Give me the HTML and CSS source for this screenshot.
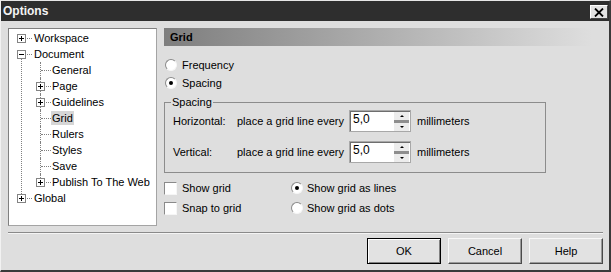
FILE: index.html
```html
<!DOCTYPE html>
<html lang="en">

<head>
    <meta charset="UTF-8">
    <title>Options</title>
    <link rel="stylesheet" href="styles.css">
</head>

<body>

    <div class="window">
        <div class="titlebar">
            <span class="title">Options</span>
            <span class="close">
                <svg width="10" height="9" viewBox="0 0 10 9">
                    <path d="M1 0.5 L9 8.5 M9 0.5 L1 8.5" stroke="#000" stroke-width="1.8" fill="none" />
                </svg>
            </span>
        </div>

        <div class="content">
            <!-- Category tree -->
            <div class="tree">
                <ul class="tree-root">
                    <li>
                        <div class="row">
                            <span class="toggle"><svg width="9" height="9"><rect x="0.5" y="0.5" width="8" height="8" fill="#fff" stroke="#848484" /><path d="M2 4.5h5M4.5 2v5" stroke="#000" /></svg></span>
                            <span class="dash"></span><span class="label">Workspace</span>
                        </div>
                    </li>
                    <li class="open">
                        <div class="row">
                            <span class="toggle"><svg width="9" height="9"><rect x="0.5" y="0.5" width="8" height="8" fill="#fff" stroke="#848484" /><path d="M2 4.5h5" stroke="#000" /></svg></span>
                            <span class="dash"></span><span class="label">Document</span>
                        </div>
                        <ul class="tree-sub">
                            <li class="leaf"><div class="row"><span class="toggle"></span><span class="dash"></span><span class="label">General</span></div></li>
                            <li>
                                <div class="row">
                                    <span class="toggle"><svg width="9" height="9"><rect x="0.5" y="0.5" width="8" height="8" fill="#fff" stroke="#848484" /><path d="M2 4.5h5M4.5 2v5" stroke="#000" /></svg></span>
                                    <span class="dash"></span><span class="label">Page</span>
                                </div>
                            </li>
                            <li>
                                <div class="row">
                                    <span class="toggle"><svg width="9" height="9"><rect x="0.5" y="0.5" width="8" height="8" fill="#fff" stroke="#848484" /><path d="M2 4.5h5M4.5 2v5" stroke="#000" /></svg></span>
                                    <span class="dash"></span><span class="label">Guidelines</span>
                                </div>
                            </li>
                            <li class="leaf"><div class="row"><span class="toggle"></span><span class="dash"></span><span class="label selected">Grid</span></div></li>
                            <li class="leaf"><div class="row"><span class="toggle"></span><span class="dash"></span><span class="label">Rulers</span></div></li>
                            <li class="leaf"><div class="row"><span class="toggle"></span><span class="dash"></span><span class="label">Styles</span></div></li>
                            <li class="leaf"><div class="row"><span class="toggle"></span><span class="dash"></span><span class="label">Save</span></div></li>
                            <li>
                                <div class="row">
                                    <span class="toggle"><svg width="9" height="9"><rect x="0.5" y="0.5" width="8" height="8" fill="#fff" stroke="#848484" /><path d="M2 4.5h5M4.5 2v5" stroke="#000" /></svg></span>
                                    <span class="dash"></span><span class="label">Publish To The Web</span>
                                </div>
                            </li>
                        </ul>
                    </li>
                    <li>
                        <div class="row">
                            <span class="toggle"><svg width="9" height="9"><rect x="0.5" y="0.5" width="8" height="8" fill="#fff" stroke="#848484" /><path d="M2 4.5h5M4.5 2v5" stroke="#000" /></svg></span>
                            <span class="dash"></span><span class="label">Global</span>
                        </div>
                    </li>
                </ul>
            </div>

            <!-- Grid page -->
            <div class="panel">
                <div class="panel-header">Grid</div>

                <div class="modes">
                    <div class="option"><span class="radio"></span>Frequency</div>
                    <div class="option"><span class="radio checked"></span>Spacing</div>
                </div>

                <fieldset class="group">
                    <legend>Spacing</legend>
                    <div class="spacing-row">
                        <span>Horizontal:</span>
                        <span>place a grid line every</span>
                        <span class="spin">
                            <span class="spin-value">5,0</span>
                            <span class="spin-buttons"><span class="spin-up"></span><span class="spin-down"></span></span>
                        </span>
                        <span>millimeters</span>
                    </div>
                    <div class="spacing-row">
                        <span>Vertical:</span>
                        <span>place a grid line every</span>
                        <span class="spin">
                            <span class="spin-value">5,0</span>
                            <span class="spin-buttons"><span class="spin-up"></span><span class="spin-down"></span></span>
                        </span>
                        <span>millimeters</span>
                    </div>
                </fieldset>

                <div class="checks">
                    <div class="option"><span class="checkbox"></span>Show grid</div>
                    <div class="option"><span class="radio checked"></span>Show grid as lines</div>
                    <div class="option"><span class="checkbox"></span>Snap to grid</div>
                    <div class="option"><span class="radio"></span>Show grid as dots</div>
                </div>
            </div>
        </div>

        <div class="separator"></div>

        <div class="buttons">
            <button class="btn btn-default">OK</button>
            <button class="btn">Cancel</button>
            <button class="btn">Help</button>
        </div>
    </div>

</body>

</html>
```

FILE: styles.css
```css
body {
    margin: 0;
    font-family: 'Liberation Sans', Arial, sans-serif;
    font-size: 11px;
    color: #000;
    background-color: #dedede;
}

.window {
    width: 611px;
    height: 272px;
    box-sizing: border-box;
    display: flex;
    flex-direction: column;
    background-color: #dedede;
    border-top: 1px solid #e6e6e6;
    border-left: 1px solid #f2f2f2;
    border-right: 2px solid #3a3a3a;
    border-bottom: 2px solid #3a3a3a;
}

/* title bar */
.titlebar {
    height: 20px;
    flex: none;
    display: flex;
    align-items: center;
    justify-content: space-between;
    background-color: #2e2e2e;
    padding: 0 1px 0 2px;
}

.title {
    color: #f4f4f4;
    font-weight: bold;
    font-size: 12px;
}

.close {
    width: 16px;
    height: 12px;
    display: flex;
    align-items: center;
    justify-content: center;
    background-color: #e2e2e2;
    border: 1px solid;
    border-color: #fff #444 #444 #fff;
    margin-top: 2px;
}

.content {
    display: flex;
    padding: 7px 0 0 7px;
    height: 198px;
    flex: none;
}

/* tree */
.tree {
    width: 149px;
    height: 198px;
    box-sizing: border-box;
    background-color: #fff;
    border: 1px solid #a4a4a4;
    border-top-color: #808080;
    border-left-color: #808080;
    padding-top: 1px;
}

.tree ul {
    list-style: none;
    margin: 0;
    padding: 0;
}

.tree li {
    position: relative;
}

.row {
    display: flex;
    align-items: center;
    height: 16px;
    padding-left: 8px;
}

.tree-sub .row {
    padding-left: 27px;
}

.toggle {
    width: 9px;
    height: 9px;
    flex: none;
    position: relative;
    z-index: 1;
}

.toggle svg {
    display: block;
}

.dash {
    width: 5px;
    margin: 0 2px 0 1px;
    border-top: 1px dotted #808080;
}

.tree-sub .dash {
    margin-right: 1px;
}

.tree-sub .leaf .dash {
    margin-left: -4px;
    width: 10px;
}

.label {
    white-space: nowrap;
}

.label.selected {
    background-color: #d6d6d6;
    padding: 0 1px;
    margin-left: -1px;
    line-height: 14px;
}

/* connector lines */
.tree-root > li.open::before {
    content: '';
    position: absolute;
    left: 12px;
    top: 12px;
    bottom: -8px;
    border-left: 1px dotted #808080;
}

.tree-sub > li::before {
    content: '';
    position: absolute;
    left: 31px;
    top: 0;
    bottom: 0;
    border-left: 1px dotted #808080;
}

.tree-sub > li:last-child::before {
    bottom: auto;
    height: 8px;
}

/* right page */
.panel {
    width: 441px;
    margin-left: 7px;
}

.panel-header {
    height: 18px;
    line-height: 18px;
    padding-left: 6px;
    font-weight: bold;
    background: linear-gradient(to right, #7e7e7e, #a6a6a6 40%, #dedede 97%);
}

.modes {
    margin-top: 10px;
}

.option {
    display: flex;
    align-items: center;
    height: 18px;
    white-space: nowrap;
}

.radio {
    width: 12px;
    height: 12px;
    box-sizing: border-box;
    margin: 0 5px 0 1px;
    border-radius: 50%;
    background-color: #fff;
    border: 1px solid;
    border-color: #8a8a8a #f6f6f6 #f6f6f6 #8a8a8a;
    display: flex;
    align-items: center;
    justify-content: center;
}

.radio.checked::after {
    content: '';
    width: 4px;
    height: 4px;
    border-radius: 50%;
    background-color: #000;
}

.checkbox {
    width: 13px;
    height: 13px;
    box-sizing: border-box;
    margin-right: 5px;
    background-color: #fff;
    border: 1px solid;
    border-color: #8a8a8a #f6f6f6 #f6f6f6 #8a8a8a;
}

/* spacing group */
.group {
    width: 382px;
    box-sizing: border-box;
    margin: 4px 0 0 0;
    padding: 1px 0 9px 8px;
    border: 1px solid #8c8c8c;
}

.group legend {
    padding: 0 1px;
    margin-left: -2px;
    line-height: 13px;
}

.spacing-row {
    display: grid;
    grid-template-columns: 64px 112px 68px auto;
    align-items: center;
    height: 22px;
    white-space: nowrap;
}

.spacing-row + .spacing-row {
    margin-top: 9px;
}

.spin {
    display: flex;
    width: 62px;
    height: 22px;
    box-sizing: border-box;
    background-color: #fff;
    border: 1px solid #a8a8a8;
    box-shadow: inset 1px 1px 0 #6e6e6e;
}

.spin-value {
    flex: 1;
    padding: 2px 0 0 3px;
    line-height: 13px;
    font-size: 12px;
}

.spin-buttons {
    width: 15px;
    flex: none;
    display: flex;
    flex-direction: column;
    padding: 1px 1px 0 0;
}

.spin-up,
.spin-down {
    display: flex;
    align-items: center;
    justify-content: center;
    background-color: #ececec;
}

.spin-up {
    height: 8px;
    border-bottom: 3px solid #8e8e8e;
}

.spin-down {
    height: 8px;
}

.spin-up::after {
    content: '';
    border-left: 2px solid transparent;
    border-right: 2px solid transparent;
    border-bottom: 2px solid #000;
}

.spin-down::after {
    content: '';
    border-left: 2px solid transparent;
    border-right: 2px solid transparent;
    border-top: 2px solid #000;
}

/* show / snap options */
.checks {
    display: grid;
    grid-template-columns: 127px auto;
    grid-auto-rows: 20px;
    margin-top: 5px;
}

.checks .option {
    height: 20px;
}

.checks .radio {
    margin-left: 0;
    margin-right: 4px;
}

/* footer */
.separator {
    margin: 6px 6px 0 7px;
    border-top: 1px solid #8a8a8a;
    border-bottom: 1px solid #f4f4f4;
}

.buttons {
    display: flex;
    justify-content: flex-end;
    gap: 7px;
    padding: 4px 6px 0 0;
}

.btn {
    width: 74px;
    height: 26px;
    font-family: 'Liberation Sans', Arial, sans-serif;
    font-size: 11px;
    color: #000;
    background-color: #e2e2e2;
    border: 1px solid;
    border-color: #f8f8f8 #4a4a4a #4a4a4a #f8f8f8;
    box-shadow: inset -1px -1px 0 #9a9a9a;
    padding: 0;
}

.btn-default {
    border-color: #000;
    box-shadow: inset 1px 1px 0 #fff, inset -1px -1px 0 #808080;
}
```
